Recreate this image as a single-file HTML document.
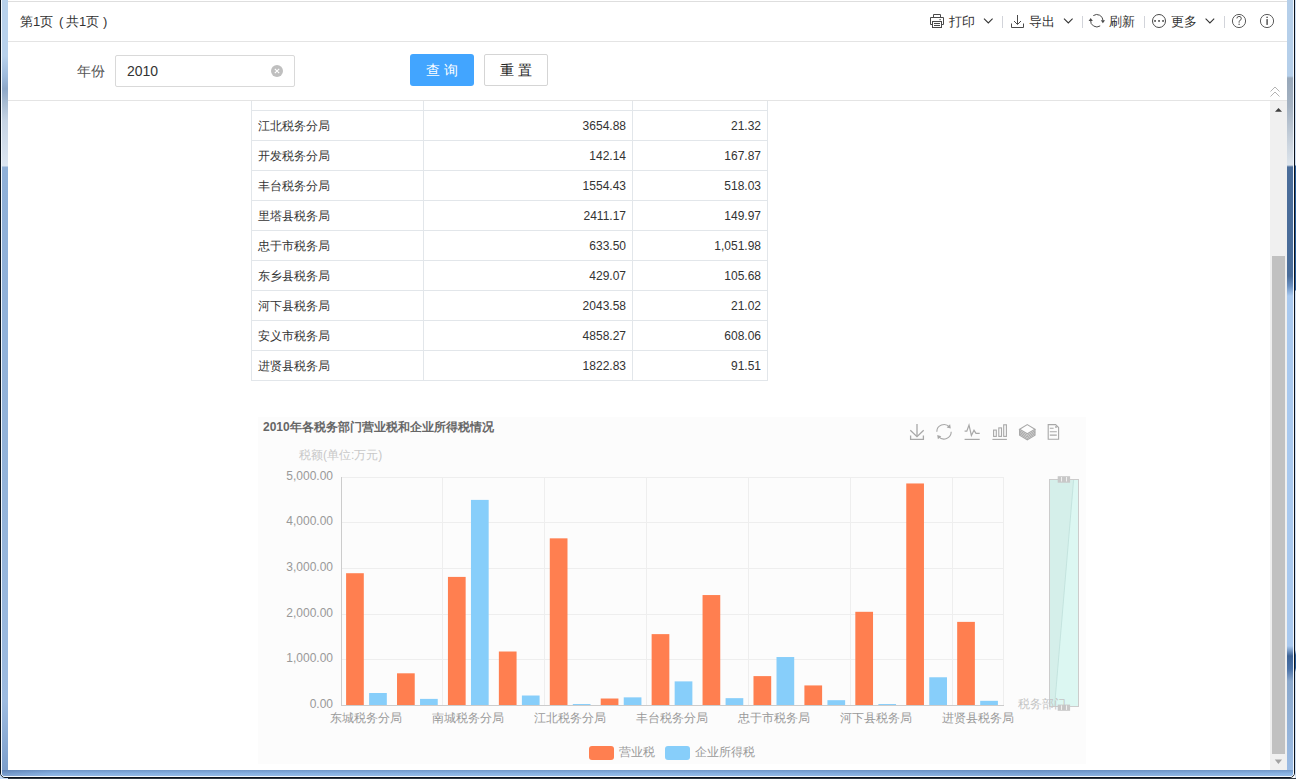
<!DOCTYPE html><html><head><meta charset="utf-8"><style>
*{box-sizing:border-box}
html,body{margin:0;padding:0;width:1296px;height:779px;overflow:hidden;background:#fff;font-family:"Liberation Sans",sans-serif;}
.a{position:absolute}
.t{position:absolute;white-space:nowrap;line-height:1}
svg{position:absolute;overflow:visible}
</style></head><body>
<div class="a" style="left:1295px;top:0;width:1px;height:779px;background:linear-gradient(#cfe0f5 0,#cfe0f5 165px,#2a5d9a 166px,#2a5d9a 290px,#cfe0f5 291px,#cfe0f5 650px,#2a5d9a 655px,#2a5d9a 668px,#cfe0f5 672px)"></div>
<div class="a" style="left:0;top:778px;width:1296px;height:1px;background:#2e3842"></div>
<div class="a" style="left:0;top:770px;width:8px;height:9px;background:#c4dcf6"></div>
<div class="a" style="left:0;top:-20px;width:1295px;height:798px;border:1px solid #0c141e;border-radius:0 0 5px 5px;background:#f0f6fc;overflow:hidden"><div class="a" style="left:0;top:0;width:1293px;height:796px;border-radius:0 0 4px 4px;overflow:hidden;border:1px solid #f2f8fe;border-top:0"><div class="a" style="left:0;top:0;width:6px;height:796px;background:linear-gradient(#b8d1eb 0px,#b8d1eb 75px,#9fbbdc 95px,#8ea8c8 108px,#a8bcd2 122px,#c6d4e4 140px,#dce6f2 185px,#8fb0d8 186px,#94b4da 520px,#9dbbe0 720px,#7d9fcb 790px)"></div><div class="a" style="left:1285px;top:0;width:6px;height:796px;background:linear-gradient(#b5cfea 0px,#b5cfea 95px,#98a8ba 97px,#a4b2c2 125px,#cdd6e0 165px,#dce4ec 184px,#4a6d9a 186px,#4a6d9a 295px,#6a90c0 305px,#a9c9ef 315px,#a9c9ef 665px,#3d6396 675px,#4a72a8 688px,#8aa8cc 700px,#9cbce4 790px)"></div><div class="a" style="left:0;top:789px;width:1291px;height:6px;background:linear-gradient(90deg,#7297c8,#86b0e2 4%,#8ab4e4 50%,#86b0e2 60%,#7aa3d6 80%,#8ab4e4)"></div><div class="a" style="left:0;top:789px;width:1291px;height:6px;background:linear-gradient(rgba(40,70,120,0.25),rgba(40,70,120,0) 60%,rgba(255,255,255,0.1))"></div></div></div>
<div class="a" style="left:8px;top:0;width:1279px;height:770px;background:#fff"></div>
<div class="a" style="left:8px;top:1px;width:1279px;height:1px;background:#dedede"></div>
<div class="a" style="left:8px;top:41px;width:1279px;height:1px;background:#e4e4e4"></div>
<div class="t" style="left:20px;top:15px;font-size:13px;color:#333;">第1页</div>
<div class="t" style="left:59px;top:15px;font-size:13px;color:#333;">(</div>
<div class="t" style="left:66px;top:15px;font-size:13px;color:#333;">共1页</div>
<div class="t" style="left:103px;top:15px;font-size:13px;color:#333;">)</div>
<svg class="a" style="left:0;top:0" width="1296" height="60" viewBox="0 0 1296 60"><g fill="none" stroke="#4a4a4a" stroke-width="1"><path d="M933.5 17.5 V14.5 H940.5 V17.5"/><path d="M932.5 24.5 H930.5 V17.5 H943.5 V24.5 H941.5"/><rect x="932.5" y="21.5" width="9" height="6"/><path d="M934 23.5 H940 M934 25.5 H940"/></g><rect x="939.5" y="19" width="1.2" height="1.2" fill="#4a4a4a"/><path d="M984.0 18.6 L988.3 22.9 L992.5999999999999 18.6" fill="none" stroke="#333" stroke-width="1.05"/><path d="M1064.0 18.6 L1068.3 22.9 L1072.6 18.6" fill="none" stroke="#333" stroke-width="1.05"/><path d="M1205.6000000000001 18.6 L1209.9 22.9 L1214.2 18.6" fill="none" stroke="#333" stroke-width="1.05"/><rect x="1002" y="16" width="1" height="12" fill="#d2d4da"/><rect x="1082" y="16" width="1" height="12" fill="#d2d4da"/><rect x="1144" y="16" width="1" height="12" fill="#d2d4da"/><rect x="1224" y="16" width="1" height="12" fill="#d2d4da"/><g fill="none" stroke="#4a4a4a" stroke-width="1"><path d="M1017.5 15 V24"/><path d="M1014 21 L1017.5 24.5 L1021 21"/><path d="M1011.5 23.5 V27.5 H1023.5 V23.5"/></g><g fill="none" stroke="#4a4a4a" stroke-width="1"><path d="M1093.3 15.6 A6.2 6.2 0 0 1 1103 20.6"/><path d="M1100.2 25.9 A6.2 6.2 0 0 1 1090.6 20.2"/></g><path d="M1100.8 20.2 L1105.0 20.2 L1102.9 23.2 Z" fill="#4a4a4a"/><path d="M1088.6 21.0 L1092.8 21.0 L1090.7 18.0 Z" fill="#4a4a4a"/><circle cx="1159" cy="21" r="6.5" fill="none" stroke="#4a4a4a" stroke-width="1"/><rect x="1154.2" y="20.1" width="1.7" height="1.7" fill="#4a4a4a"/><rect x="1158.2" y="20.1" width="1.7" height="1.7" fill="#4a4a4a"/><rect x="1162.2" y="20.1" width="1.7" height="1.7" fill="#4a4a4a"/><circle cx="1239" cy="21" r="6.6" fill="none" stroke="#4a4a4a" stroke-width="0.9"/><path d="M1236.9 18.4 A2.2 2.1 0 1 1 1239.7 20.5 Q1239.1 21.1 1239.1 22.7" fill="none" stroke="#4a4a4a" stroke-width="0.95"/><rect x="1238.5" y="23.7" width="1.2" height="1.2" fill="#4a4a4a"/><circle cx="1267" cy="21" r="6.6" fill="none" stroke="#4a4a4a" stroke-width="0.9"/><rect x="1266.4" y="16.7" width="1.4" height="1.3" fill="#4a4a4a"/><rect x="1266.4" y="19.1" width="1.4" height="5.8" fill="#4a4a4a"/></svg>
<div class="t" style="left:949px;top:15px;font-size:13px;color:#333;">打印</div>
<div class="t" style="left:1029px;top:15px;font-size:13px;color:#333;">导出</div>
<div class="t" style="left:1109px;top:15px;font-size:13px;color:#333;">刷新</div>
<div class="t" style="left:1171px;top:15px;font-size:13px;color:#333;">更多</div>
<div class="a" style="left:8px;top:100px;width:1279px;height:1px;background:#e4e4e4"></div>
<div class="t" style="left:77px;top:64px;font-size:14px;color:#555;">年份</div>
<div class="a" style="left:115px;top:55px;width:180px;height:32px;border:1px solid #d9d9d9;border-radius:2px"></div>
<div class="t" style="left:127px;top:64px;font-size:14px;color:#333;">2010</div>
<div class="a" style="left:271px;top:65px;width:12px;height:12px;border-radius:6px;background:#bfbfbf"></div>
<div class="a" style="left:410px;top:54px;width:64px;height:32px;border-radius:3px;background:#42a5ff"></div>
<div class="t" style="left:426px;top:63px;font-size:14px;color:#fff;">查&nbsp;询</div>
<div class="a" style="left:484px;top:54px;width:64px;height:32px;border-radius:2px;border:1px solid #d5d5d5"></div>
<div class="t" style="left:500px;top:63px;font-size:14px;color:#222;">重&nbsp;置</div>
<div class="a" style="left:1270px;top:101px;width:17px;height:669px;background:#f0f0f0"></div>
<div class="a" style="left:1272px;top:256px;width:13px;height:498px;background:#c1c1c1"></div>
<div class="a" style="left:251px;top:101px;width:1px;height:280px;background:#e2e6ea"></div>
<div class="a" style="left:423px;top:101px;width:1px;height:280px;background:#e2e6ea"></div>
<div class="a" style="left:632px;top:101px;width:1px;height:280px;background:#e2e6ea"></div>
<div class="a" style="left:767px;top:101px;width:1px;height:280px;background:#e2e6ea"></div>
<div class="a" style="left:251px;top:110px;width:517px;height:1px;background:#e2e6ea"></div>
<div class="a" style="left:251px;top:140px;width:517px;height:1px;background:#e2e6ea"></div>
<div class="a" style="left:251px;top:170px;width:517px;height:1px;background:#e2e6ea"></div>
<div class="a" style="left:251px;top:200px;width:517px;height:1px;background:#e2e6ea"></div>
<div class="a" style="left:251px;top:230px;width:517px;height:1px;background:#e2e6ea"></div>
<div class="a" style="left:251px;top:260px;width:517px;height:1px;background:#e2e6ea"></div>
<div class="a" style="left:251px;top:290px;width:517px;height:1px;background:#e2e6ea"></div>
<div class="a" style="left:251px;top:320px;width:517px;height:1px;background:#e2e6ea"></div>
<div class="a" style="left:251px;top:350px;width:517px;height:1px;background:#e2e6ea"></div>
<div class="a" style="left:251px;top:380px;width:517px;height:1px;background:#e2e6ea"></div>
<div class="t" style="left:258px;top:120px;font-size:12px;color:#333;">江北税务分局</div>
<div class="t" style="right:670px;top:120px;font-size:12px;color:#333;">3654.88</div>
<div class="t" style="right:535px;top:120px;font-size:12px;color:#333;">21.32</div>
<div class="t" style="left:258px;top:150px;font-size:12px;color:#333;">开发税务分局</div>
<div class="t" style="right:670px;top:150px;font-size:12px;color:#333;">142.14</div>
<div class="t" style="right:535px;top:150px;font-size:12px;color:#333;">167.87</div>
<div class="t" style="left:258px;top:180px;font-size:12px;color:#333;">丰台税务分局</div>
<div class="t" style="right:670px;top:180px;font-size:12px;color:#333;">1554.43</div>
<div class="t" style="right:535px;top:180px;font-size:12px;color:#333;">518.03</div>
<div class="t" style="left:258px;top:210px;font-size:12px;color:#333;">里塔县税务局</div>
<div class="t" style="right:670px;top:210px;font-size:12px;color:#333;">2411.17</div>
<div class="t" style="right:535px;top:210px;font-size:12px;color:#333;">149.97</div>
<div class="t" style="left:258px;top:240px;font-size:12px;color:#333;">忠于市税务局</div>
<div class="t" style="right:670px;top:240px;font-size:12px;color:#333;">633.50</div>
<div class="t" style="right:535px;top:240px;font-size:12px;color:#333;">1,051.98</div>
<div class="t" style="left:258px;top:270px;font-size:12px;color:#333;">东乡县税务局</div>
<div class="t" style="right:670px;top:270px;font-size:12px;color:#333;">429.07</div>
<div class="t" style="right:535px;top:270px;font-size:12px;color:#333;">105.68</div>
<div class="t" style="left:258px;top:300px;font-size:12px;color:#333;">河下县税务局</div>
<div class="t" style="right:670px;top:300px;font-size:12px;color:#333;">2043.58</div>
<div class="t" style="right:535px;top:300px;font-size:12px;color:#333;">21.02</div>
<div class="t" style="left:258px;top:330px;font-size:12px;color:#333;">安义市税务局</div>
<div class="t" style="right:670px;top:330px;font-size:12px;color:#333;">4858.27</div>
<div class="t" style="right:535px;top:330px;font-size:12px;color:#333;">608.06</div>
<div class="t" style="left:258px;top:360px;font-size:12px;color:#333;">进贤县税务局</div>
<div class="t" style="right:670px;top:360px;font-size:12px;color:#333;">1822.83</div>
<div class="t" style="right:535px;top:360px;font-size:12px;color:#333;">91.51</div>
<div class="a" style="left:258px;top:417px;width:828px;height:347px;background:#fcfcfc"></div>
<div class="t" style="left:263px;top:421px;font-size:12px;color:#666;font-weight:bold">2010年各税务部门营业税和企业所得税情况</div>
<div class="t" style="left:299px;top:449px;font-size:12px;color:#c8c8c8;">税额(单位:万元)</div>
<svg class="a" style="left:0;top:0" width="1296" height="779" viewBox="0 0 1296 779"><line x1="341" y1="477.5" x2="1004" y2="477.5" stroke="#eeeeee" stroke-width="1"/><line x1="341" y1="522.5" x2="1004" y2="522.5" stroke="#eeeeee" stroke-width="1"/><line x1="341" y1="568.5" x2="1004" y2="568.5" stroke="#eeeeee" stroke-width="1"/><line x1="341" y1="614.5" x2="1004" y2="614.5" stroke="#eeeeee" stroke-width="1"/><line x1="341" y1="659.5" x2="1004" y2="659.5" stroke="#eeeeee" stroke-width="1"/><line x1="442.5" y1="477" x2="442.5" y2="705" stroke="#eeeeee" stroke-width="1"/><line x1="544.5" y1="477" x2="544.5" y2="705" stroke="#eeeeee" stroke-width="1"/><line x1="646.5" y1="477" x2="646.5" y2="705" stroke="#eeeeee" stroke-width="1"/><line x1="748.5" y1="477" x2="748.5" y2="705" stroke="#eeeeee" stroke-width="1"/><line x1="850.5" y1="477" x2="850.5" y2="705" stroke="#eeeeee" stroke-width="1"/><line x1="952.5" y1="477" x2="952.5" y2="705" stroke="#eeeeee" stroke-width="1"/><line x1="1003.5" y1="477" x2="1003.5" y2="705" stroke="#eeeeee" stroke-width="1"/><rect x="346.09" y="573.22" width="17.71" height="131.78" fill="#ff7f50"/><rect x="369.12" y="693.01" width="17.71" height="11.99" fill="#87cefa"/><rect x="397.02" y="673.31" width="17.71" height="31.69" fill="#ff7f50"/><rect x="420.04" y="698.89" width="17.71" height="6.11" fill="#87cefa"/><rect x="447.94" y="576.91" width="17.71" height="128.09" fill="#ff7f50"/><rect x="470.96" y="499.89" width="17.71" height="205.11" fill="#87cefa"/><rect x="498.86" y="651.51" width="17.71" height="53.49" fill="#ff7f50"/><rect x="521.89" y="695.52" width="17.71" height="9.48" fill="#87cefa"/><rect x="549.78" y="538.34" width="17.71" height="166.66" fill="#ff7f50"/><rect x="572.81" y="704.03" width="17.71" height="0.97" fill="#87cefa"/><rect x="600.71" y="698.52" width="17.71" height="6.48" fill="#ff7f50"/><rect x="623.73" y="697.35" width="17.71" height="7.65" fill="#87cefa"/><rect x="651.63" y="634.12" width="17.71" height="70.88" fill="#ff7f50"/><rect x="674.66" y="681.38" width="17.71" height="23.62" fill="#87cefa"/><rect x="702.55" y="595.05" width="17.71" height="109.95" fill="#ff7f50"/><rect x="725.58" y="698.16" width="17.71" height="6.84" fill="#87cefa"/><rect x="753.48" y="676.11" width="17.71" height="28.89" fill="#ff7f50"/><rect x="776.50" y="657.03" width="17.71" height="47.97" fill="#87cefa"/><rect x="804.40" y="685.43" width="17.71" height="19.57" fill="#ff7f50"/><rect x="827.43" y="700.18" width="17.71" height="4.82" fill="#87cefa"/><rect x="855.32" y="611.81" width="17.71" height="93.19" fill="#ff7f50"/><rect x="878.35" y="704.04" width="17.71" height="0.96" fill="#87cefa"/><rect x="906.25" y="483.46" width="17.71" height="221.54" fill="#ff7f50"/><rect x="929.27" y="677.27" width="17.71" height="27.73" fill="#87cefa"/><rect x="957.17" y="621.88" width="17.71" height="83.12" fill="#ff7f50"/><rect x="980.20" y="700.83" width="17.71" height="4.17" fill="#87cefa"/><line x1="341.5" y1="477" x2="341.5" y2="706" stroke="#cccccc" stroke-width="1"/><line x1="341" y1="705.5" x2="1004" y2="705.5" stroke="#cccccc" stroke-width="1"/></svg>
<div class="t" style="right:963px;top:470px;font-size:12px;color:#999;">5,000.00</div>
<div class="t" style="right:963px;top:515px;font-size:12px;color:#999;">4,000.00</div>
<div class="t" style="right:963px;top:561px;font-size:12px;color:#999;">3,000.00</div>
<div class="t" style="right:963px;top:607px;font-size:12px;color:#999;">2,000.00</div>
<div class="t" style="right:963px;top:652px;font-size:12px;color:#999;">1,000.00</div>
<div class="t" style="right:963px;top:698px;font-size:12px;color:#999;">0.00</div>
<div class="t" style="left:166.46153846153845px;width:400px;text-align:center;top:712px;font-size:12px;color:#999;">东城税务分局</div>
<div class="t" style="left:268.30769230769226px;width:400px;text-align:center;top:712px;font-size:12px;color:#999;">南城税务分局</div>
<div class="t" style="left:370.1538461538462px;width:400px;text-align:center;top:712px;font-size:12px;color:#999;">江北税务分局</div>
<div class="t" style="left:472.0px;width:400px;text-align:center;top:712px;font-size:12px;color:#999;">丰台税务分局</div>
<div class="t" style="left:573.8461538461538px;width:400px;text-align:center;top:712px;font-size:12px;color:#999;">忠于市税务局</div>
<div class="t" style="left:675.6923076923076px;width:400px;text-align:center;top:712px;font-size:12px;color:#999;">河下县税务局</div>
<div class="t" style="left:777.5384615384615px;width:400px;text-align:center;top:712px;font-size:12px;color:#999;">进贤县税务局</div>
<div class="a" style="left:589px;top:746px;width:25px;height:14px;background:#ff7f50;border-radius:3px"></div>
<div class="t" style="left:619px;top:746px;font-size:12px;color:#999;">营业税</div>
<div class="a" style="left:665px;top:746px;width:25px;height:14px;background:#87cefa;border-radius:3px"></div>
<div class="t" style="left:695px;top:746px;font-size:12px;color:#999;">企业所得税</div>
<svg class="a" style="left:0;top:0" width="1296" height="779" viewBox="0 0 1296 779"><g fill="none" stroke="#a8a8a8" stroke-width="1.3"><path d="M917 424 V436"/><path d="M910.3 430.2 L917 436.6 L923.7 430.2"/><path d="M910.6 435.6 V439.3 H923.4 V435.6"/></g><g fill="none" stroke="#a8a8a8" stroke-width="1.15"><path d="M936.80 431.80 A7.2 7.2 0 0 1 949.35 426.98"/><path d="M951.20 431.80 A7.2 7.2 0 0 1 938.65 436.62"/></g><path d="M950.80 428.59 L950.10 424.37 L946.68 427.45 Z" fill="#a8a8a8"/><path d="M937.20 435.01 L937.90 439.23 L941.32 436.15 Z" fill="#a8a8a8"/><g fill="none" stroke="#a8a8a8" stroke-width="1.2"><path d="M964.6 431.1 H966.8 L969 425 L971.4 435.4 L974 430.3 L976 433.3 H979.7"/><path d="M964.6 439.4 H979.7"/></g><g fill="none" stroke="#a8a8a8" stroke-width="1.1"><rect x="993.6" y="430.1" width="2.7" height="6.3"/><rect x="998.8" y="427.9" width="2.7" height="8.5"/><rect x="1003.7" y="424.8" width="2.7" height="11.6"/><path d="M992.4 439.4 H1006.9"/></g><g fill="none" stroke="#a8a8a8" stroke-width="1.1"><path d="M1027.3 424.6 L1035 429.2 L1027.3 433.8 L1019.6 429.2 Z" fill="#fdfdfd"/><path d="M1019.6 429.2 V435.2 L1027.3 439.8 L1035 435.2 V429.2"/><path d="M1019.6 430.8 L1027.3 435.4 L1035 430.8"/><path d="M1019.6 432.3 L1027.3 436.9 L1035 432.3"/><path d="M1019.6 433.8 L1027.3 438.4 L1035 433.8"/></g><g fill="none" stroke="#a8a8a8" stroke-width="1.1"><path d="M1048.2 424.6 H1055.6 L1058.6 427.6 V439.3 H1048.2 Z"/><path d="M1049.8 428.3 H1053.6 M1049.8 431.7 H1056.8 M1049.8 435.1 H1056.8"/></g><circle cx="1056" cy="427" r="0.9" fill="#a8a8a8"/><rect x="1049.5" y="479.5" width="29" height="227" fill="#d5efea" stroke="#cccccc" stroke-width="1"/><path d="M1073.6 480 L1078 480 L1078 706 L1054.6 706 Z" fill="#dcf7f2"/><path d="M1073.6 480 L1054.6 706" fill="none" stroke="#bfe0da" stroke-width="0.8"/><rect x="1049.5" y="479.5" width="29" height="227" fill="none" stroke="#cccccc" stroke-width="1"/><rect x="1057.7" y="476.2" width="12.4" height="6.5" fill="#c8c8c8"/><rect x="1061" y="477" width="0.9" height="4.5" fill="#f4f4f4"/><rect x="1066" y="477" width="0.9" height="4.5" fill="#f4f4f4"/><rect x="1057.7" y="704.6" width="12.4" height="6.2" fill="#c8c8c8"/><rect x="1061" y="705.4" width="0.9" height="4.5" fill="#f4f4f4"/><rect x="1066" y="705.4" width="0.9" height="4.5" fill="#f4f4f4"/><path d="M1275 111.7 L1282 111.7 L1278.5 108 Z" fill="#404040"/><path d="M1274.8 759.5 L1282 759.5 L1278.4 764 Z" fill="#a3a3a3"/><path d="M1270.5 91.5 L1275 87 L1279.5 91.5 M1270.5 96.5 L1275 92 L1279.5 96.5" fill="none" stroke="#b4b4b4" stroke-width="1"/><path d="M274.8 68.8 L279.2 73.2 M279.2 68.8 L274.8 73.2" stroke="#fff" stroke-width="1.1"/></svg>
<div class="t" style="left:1018px;top:698px;font-size:12px;color:#c4c4c4;">税务部门</div>
</body></html>
